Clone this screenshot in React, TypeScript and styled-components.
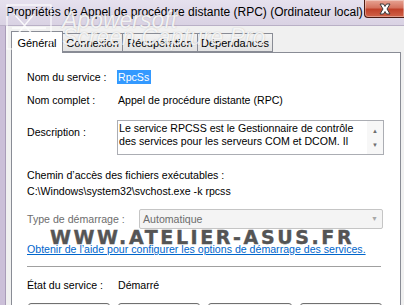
import React from 'react';
import styled, { createGlobalStyle } from 'styled-components';

const GlobalStyle = createGlobalStyle`
  html, body {
    margin: 0;
    padding: 0;
    overflow: hidden;
    background: #f0f0f0;
  }
  body {
    font-family: "Liberation Sans", Arial, sans-serif;
    font-size: 10.6px;
    color: #000;
  }
`;

const tabs = [
  { label: 'Général', width: 52, active: true },
  { label: 'Connexion', width: 61, active: false },
  { label: 'Récupération', width: 76, active: false },
  { label: 'Dépendances', width: 76, active: false },
];

const buttons = [82, 82, 84, 82];

const App: React.FC = () => {
  return (
    <Window>
      <GlobalStyle />
      <TitleBar>
        <Title>Propriétés de Appel de procédure distante (RPC) (Ordinateur local)</Title>
        <CloseButton>
          <svg width="16" height="12" viewBox="0 0 16 12">
            <path
              d="M3 1 L6.5 1 L8 3.5 L9.5 1 L13 1 L10 6 L13 11 L9.5 11 L8 8.5 L6.5 11 L3 11 L6 6 Z"
              fill="#fff"
              stroke="#3b3b3b"
              strokeWidth="1"
              strokeLinejoin="round"
            />
          </svg>
        </CloseButton>
      </TitleBar>

      <Body>
        <FrameEdge />
        <Client>
          <TabRow>
            {tabs.map((t) => (
              <Tab key={t.label} $active={t.active} $width={t.width}>
                {t.label}
              </Tab>
            ))}
          </TabRow>

          <Panel>
            <Row $top={17}>
              <Label>Nom du service :</Label>
              <Selected>RpcSs</Selected>
            </Row>
            <Row $top={9}>
              <Label>Nom complet :</Label>
              <Value>Appel de procédure distante (RPC)</Value>
            </Row>
            <Row $top={13} $align="flex-start">
              <Label $pad={5}>Description :</Label>
              <TextArea>
                <TextBody>
                  Le service RPCSS est le Gestionnaire de contrôle
                  <br />
                  des services pour les serveurs COM et DCOM. Il
                </TextBody>
                <ScrollBar>
                  <Arrow>▲</Arrow>
                  <Arrow>▼</Arrow>
                </ScrollBar>
              </TextArea>
            </Row>

            <PathBlock>
              <div>Chemin d’accès des fichiers exécutables :</div>
              <div>C:\Windows\system32\svchost.exe -k rpcss</div>
            </PathBlock>

            <Row $top={10}>
              <Label $disabled $width={112}>Type de démarrage :</Label>
              <Select>
                <span>Automatique</span>
                <SelectArrow>▼</SelectArrow>
              </Select>
            </Row>

            <HelpLink href="#">
              Obtenir de l’aide pour configurer les options de démarrage des services.
            </HelpLink>

            <Separator />

            <Row $top={11}>
              <Label>État du service :</Label>
              <Value>Démarré</Value>
            </Row>

            <ButtonRow>
              {buttons.map((w, i) => (
                <DialogButton key={i} $width={w} />
              ))}
            </ButtonRow>
          </Panel>
        </Client>
      </Body>

      <AppWatermark>
        <svg width="46" height="46" viewBox="0 0 46 46">
          <rect x="1" y="1" width="44" height="44" fill="none" stroke="rgba(255,255,255,0.9)" strokeWidth="1.2" />
          <path d="M8 10 L30 34 M28 10 L10 32 M6 24 L40 24" stroke="rgba(255,255,255,0.85)" strokeWidth="1.4" fill="none" />
        </svg>
        <AppWatermarkText>
          <div>Apowersoft</div>
          <div>Screen Capture Pro</div>
        </AppWatermarkText>
      </AppWatermark>

      <SiteWatermark>WWW.ATELIER-ASUS.FR</SiteWatermark>
    </Window>
  );
};

const Window = styled.div`
  position: relative;
  width: 404px;
  height: 305px;
  overflow: hidden;
  display: flex;
  flex-direction: column;
  background: #f0f0f0;
`;

const TitleBar = styled.div`
  height: 25px;
  flex-shrink: 0;
  display: flex;
  justify-content: space-between;
  align-items: flex-start;
  background: linear-gradient(#e6e1ee, #d9d2e3);
  border-bottom: 1px solid #b9b0c6;
`;

const Title = styled.div`
  font-family: "Liberation Sans", Arial, sans-serif;
  font-size: 12px;
  color: #000;
  padding: 5px 0 0 6px;
  white-space: nowrap;
`;

const CloseButton = styled.div`
  width: 39px;
  height: 17px;
  display: flex;
  align-items: center;
  justify-content: center;
  border: 1px solid #4a1a12;
  border-top: none;
  border-right: none;
  border-bottom-left-radius: 4px;
  background: linear-gradient(#e7a494 0%, #d5735f 45%, #c0412a 55%, #d06349 100%);
  box-shadow: inset 0 0 0 1px rgba(255, 255, 255, 0.35);
`;

const Body = styled.div`
  flex: 1;
  display: flex;
  min-height: 0;
`;

const FrameEdge = styled.div`
  width: 5px;
  background: #cbbfd8;
  border-right: 1px solid #a99cb8;
`;

const Client = styled.div`
  flex: 1;
  padding: 5px 3px 0 5px;
  display: flex;
  flex-direction: column;
`;

const TabRow = styled.div`
  display: flex;
  align-items: flex-end;
  height: 21px;
  position: relative;
  z-index: 1;
  font-size: 11px;
`;

const Tab = styled.div<{ $active: boolean; $width: number }>`
  width: ${(p) => p.$width}px;
  box-sizing: border-box;
  height: ${(p) => (p.$active ? 22 : 19)}px;
  margin-bottom: ${(p) => (p.$active ? -1 : 0)}px;
  margin-left: ${(p) => (p.$active ? 0 : -1)}px;
  display: flex;
  align-items: center;
  justify-content: center;
  border: 1px solid #898c95;
  border-bottom: ${(p) => (p.$active ? 'none' : '1px solid #898c95')};
  background: ${(p) => (p.$active ? '#fff' : 'linear-gradient(#f3f3f3, #e3e3e3)')};
  color: #000;
  white-space: nowrap;
  padding-top: ${(p) => (p.$active ? 0 : 1)}px;
  position: relative;
  z-index: ${(p) => (p.$active ? 2 : 1)};
  &:first-child {
    margin-left: 0;
  }
`;

const Panel = styled.div`
  flex: 1;
  background: #fff;
  border: 1px solid #898c95;
  border-bottom: none;
  padding: 0 16px 0 15px;
  display: flex;
  flex-direction: column;
`;

const Row = styled.div<{ $top: number; $align?: string }>`
  display: flex;
  align-items: ${(p) => p.$align || 'center'};
  margin-top: ${(p) => p.$top}px;
  line-height: 14px;
`;

const Label = styled.div<{ $pad?: number; $disabled?: boolean; $width?: number }>`
  width: ${(p) => p.$width || 90}px;
  flex-shrink: 0;
  padding-top: ${(p) => p.$pad || 0}px;
  color: ${(p) => (p.$disabled ? '#6d6d6d' : '#000')};
  white-space: nowrap;
`;

const Value = styled.div`
  padding-left: 1px;
  white-space: nowrap;
`;

const Selected = styled.span`
  background: #3399ff;
  color: #fff;
  padding: 0 2px 0 1px;
  line-height: 14px;
`;

const TextArea = styled.div`
  width: 267px;
  height: 35px;
  box-sizing: border-box;
  border: 1px solid #abadb3;
  display: flex;
`;

const TextBody = styled.div`
  flex: 1;
  padding: 1px 0 0 1px;
  line-height: 12.5px;
  white-space: nowrap;
  overflow: hidden;
`;

const ScrollBar = styled.div`
  width: 16px;
  background: #f7f7f7;
  display: flex;
  flex-direction: column;
  align-items: center;
  justify-content: space-between;
  padding: 7px 0 6px;
  box-sizing: border-box;
`;

const Arrow = styled.span`
  font-size: 6px;
  line-height: 6px;
  color: #6e6e6e;
`;

const PathBlock = styled.div`
  margin-top: 12px;
  line-height: 16px;
  white-space: nowrap;
`;

const Select = styled.div`
  width: 244px;
  height: 20px;
  box-sizing: border-box;
  border: 1px solid #c5c5c5;
  border-radius: 2px;
  background: #f4f4f4;
  color: #6d6d6d;
  display: flex;
  align-items: center;
  justify-content: space-between;
  padding: 0 4px 0 3px;
`;

const SelectArrow = styled.span`
  font-size: 7px;
  color: #a8a8a8;
`;

const HelpLink = styled.a`
  margin-top: 13px;
  color: #0066cc;
  text-decoration: underline;
  line-height: 14px;
  white-space: nowrap;
`;

const Separator = styled.div`
  margin-top: 10px;
  height: 1px;
  width: 354px;
  background: #a0a0a0;
`;

const ButtonRow = styled.div`
  margin-top: 11px;
  display: flex;
  gap: 8px;
  padding-left: 1px;
`;

const DialogButton = styled.div<{ $width: number }>`
  width: ${(p) => p.$width}px;
  height: 23px;
  box-sizing: border-box;
  border: 1px solid #707070;
  border-radius: 3px;
  background: linear-gradient(#f2f2f2, #ebebeb 50%, #dddddd 50%, #cfcfcf);
`;

const AppWatermark = styled.div`
  position: absolute;
  left: 6px;
  top: 4px;
  z-index: 10;
  display: flex;
  align-items: flex-start;
  gap: 10px;
  pointer-events: none;
`;

const AppWatermarkText = styled.div`
  font-family: "Liberation Sans", Arial, sans-serif;
  font-style: italic;
  font-size: 23px;
  line-height: 17px;
  color: rgba(255, 255, 255, 0.85);
  text-shadow: 0 0 1px rgba(120, 120, 120, 0.5);
  padding-top: 8px;
  white-space: nowrap;
`;

const SiteWatermark = styled.div`
  position: absolute;
  left: 50px;
  top: 228px;
  z-index: 10;
  font-family: "DejaVu Sans", sans-serif;
  font-weight: bold;
  font-size: 19px;
  line-height: 19px;
  letter-spacing: 2.6px;
  color: #555;
  -webkit-text-stroke: 0.4px #555;
  text-shadow: 1px 0 #fff, -1px 0 #fff, 0 1px #fff, 0 -1px #fff;
  white-space: nowrap;
  pointer-events: none;
`;

export default App;
